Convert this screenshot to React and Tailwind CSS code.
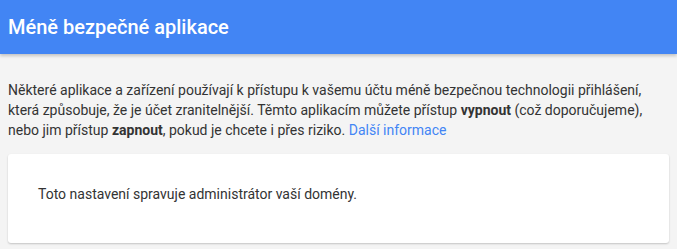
export default function App() {
  return (
    <div className="min-h-[249px] bg-[#f4f4f4] font-['Roboto',sans-serif]">
      <div className="h-[54px] bg-[#4285f4] flex items-center px-2 shadow-[0_2px_3px_rgba(0,0,0,0.2)]">
        <h1 className="text-[20px] font-medium text-white">Méně bezpečné aplikace</h1>
      </div>
      <div className="px-2 pt-[26px]">
        <p className="text-[14px] leading-[20px] text-[#333]">
          Některé aplikace a zařízení používají k přístupu k vašemu účtu méně bezpečnou technologii přihlášení,
          která způsobuje, že je účet zranitelnější. Těmto aplikacím můžete přístup <b className="font-bold">vypnout</b> (což
          doporučujeme), nebo jim přístup <b className="font-bold">zapnout</b>, pokud je chcete i přes riziko.{" "}
          <a className="text-[#4285f4]">Další informace</a>
        </p>
        <div className="mt-[14px] bg-white rounded-[3px] shadow-[0_1px_2px_rgba(0,0,0,0.2)] pl-[30px] pt-[30px] pb-[39px]">
          <p className="text-[14px] leading-[20px] text-[#333]">
            Toto nastavení spravuje administrátor vaší domény.
          </p>
        </div>
      </div>
    </div>
  );
}
